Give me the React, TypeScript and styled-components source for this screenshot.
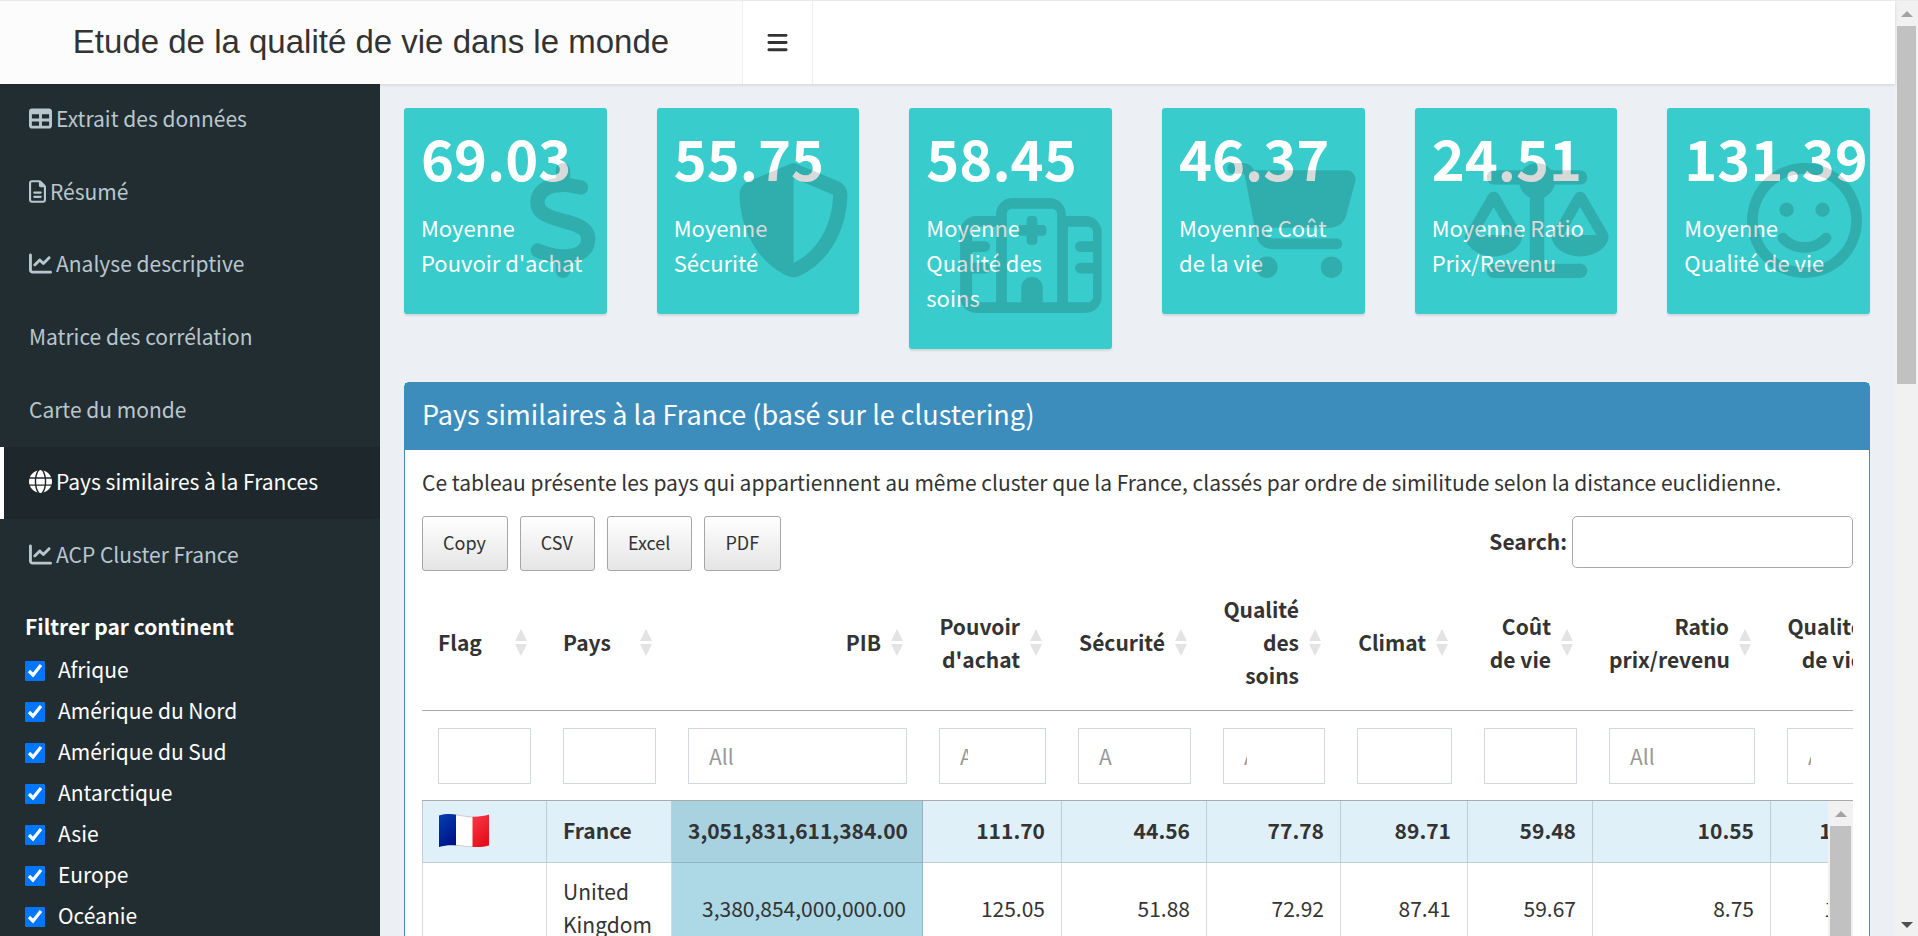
import React from 'react';
import styled, { createGlobalStyle } from 'styled-components';
import {
  FaBars,
  FaCartShopping,
  FaChartLine,
  FaDollarSign,
  FaGlobe,
  FaRegFaceSmile,
  FaRegFileLines,
  FaRegHospital,
  FaScaleBalanced,
  FaShieldHalved,
  FaTable,
} from 'react-icons/fa6';

const GlobalStyle = createGlobalStyle`
  * { box-sizing: border-box; }
  body {
    margin: 0;
    background: #ecf0f5;
    color: #333;
    font-family: "Noto Sans CJK SC", "Noto Sans", sans-serif;
    font-size: 21px;
    line-height: 33px;
  }
  h1, h2, h3, p, ul { margin: 0; padding: 0; }
  button, input { font: inherit; color: inherit; }
`;

/* ---------- page frame ---------- */

const Frame = styled.div`
  display: flex;
  height: 100vh;
  overflow: hidden;
  border-top: 1px solid #e8eaf0;
`;

const Page = styled.div`
  flex: 1;
  min-width: 0;
  display: flex;
  flex-direction: column;
`;

const Header = styled.header`
  position: relative;
  z-index: 1;
  flex: none;
  display: flex;
  height: 83px;
  background: #fff;
  box-shadow: 0 1px 3px rgba(0, 0, 0, 0.12);
`;

const Brand = styled.h1`
  width: 743px;
  border-right: 1px solid #eee;
  background: #fcfcfc;
  font: 400 33px/82px "Liberation Sans", Arial, sans-serif;
  text-align: center;
`;

const MenuToggle = styled.button`
  display: flex;
  align-items: center;
  justify-content: center;
  width: 70px;
  padding: 0;
  border: 0;
  border-right: 1px solid #eee;
  background: none;
  font-size: 23px;
`;

const Body = styled.div`
  flex: 1;
  min-height: 0;
  display: flex;
`;

/* ---------- sidebar ---------- */

const Sidebar = styled.aside`
  flex: none;
  width: 380px;
  overflow: hidden;
  background: #222d32;
  color: #fff;
`;

const Menu = styled.nav`
  display: grid;
  grid-auto-rows: 1fr;
  height: 508px;
`;

const MenuLink = styled.a<{ $active?: boolean }>`
  display: flex;
  align-items: center;
  gap: 4px;
  padding: 0 25px 3px;
  border-left: 4px solid ${(p) => (p.$active ? '#fff' : 'transparent')};
  background: ${(p) => (p.$active ? '#1e282c' : 'transparent')};
  color: ${(p) => (p.$active ? '#fff' : '#b8c7ce')};
  text-decoration: none;
`;

const MenuIcon = styled.span<{ $width: number }>`
  display: flex;

  svg { width: ${(p) => p.$width}px; height: 23px; }
`;

const Filters = styled.fieldset`
  margin: 0;
  padding: 18px 25px;
  border: 0;
`;

const FiltersTitle = styled.legend`
  float: left;
  width: 100%;
  padding: 0;
  margin-bottom: 7px;
  font-weight: 700;
`;

const FilterOption = styled.label`
  clear: both;
  display: flex;
  align-items: center;
  gap: 13px;
  height: 41px;

  input { width: 20px; height: 20px; margin: 0; accent-color: #0075ff; }
  span { padding-bottom: 2px; }
`;

/* ---------- value boxes ---------- */

const Main = styled.main`
  flex: 1;
  min-width: 0;
  padding: 24px 25px 0 24px;
  overflow: hidden;
`;

const ValueBoxes = styled.div`
  display: grid;
  grid-template-columns: repeat(6, 1fr);
  align-items: start;
  gap: 50px;
  margin-bottom: 33px;
`;

const ValueBox = styled.section`
  position: relative;
  min-width: 0;
  padding: 14px 16px 34px 17px;
  border-radius: 3px;
  background: #39cccc;
  color: #fff;
  box-shadow: 0 2px 2px rgba(0, 0, 0, 0.1);
`;

const Value = styled.h3`
  margin-bottom: 19px;
  font-size: 56px;
  font-weight: 700;
  line-height: 69px;
  white-space: nowrap;
`;

const ValueLabel = styled.p`
  font-size: 22px;
  line-height: 35px;
`;

const ValueIcon = styled.div<{ $width: number }>`
  position: absolute;
  right: 8px;
  bottom: 36px;
  display: flex;
  color: rgba(0, 0, 0, 0.15);

  svg { width: ${(p) => p.$width}px; height: 115px; }
`;

/* ---------- panel ---------- */

const Panel = styled.section`
  border: 1px solid #3c8dbc;
  border-radius: 5px 5px 0 0;
  background: #fff;
`;

const PanelTitle = styled.h2`
  padding: 14px 17px 20px;
  background: #3c8dbc;
  color: #fff;
  font-size: 27px;
  font-weight: 400;
  line-height: 33px;
`;

const PanelBody = styled.div`
  padding: 16px 16px 0 17px;
`;

const Toolbar = styled.div`
  display: flex;
  justify-content: space-between;
  align-items: flex-start;
  margin-top: 17px;
`;

const Buttons = styled.div`
  display: flex;
  gap: 12px;
`;

const ExportButton = styled.button`
  height: 55px;
  padding: 0 21px 2px 20px;
  border: 1px solid #a6a6a6;
  border-radius: 3px;
  background: linear-gradient(#fff, #e5e5e5);
  font-size: 18px;
`;

const Search = styled.label`
  display: flex;
  align-items: center;
  gap: 5px;
  font-weight: 700;

  span { padding-bottom: 2px; }
  input {
    width: 281px;
    height: 52px;
    padding: 0 8px;
    border: 1px solid #aaa;
    border-radius: 5px;
    background: transparent;
  }
`;

/* ---------- data table ---------- */

const Clip = styled.div`
  flex: 1;
  min-width: 0;
  overflow: hidden;
`;

const HeadClip = styled(Clip)`
  margin-top: 5px;
  border-bottom: 1px solid #aaa;
`;

const Table = styled.table`
  width: 1483px;
  table-layout: fixed;
  border-collapse: separate;
  border-spacing: 0;
`;

const HeadCell = styled.th<{ $left?: boolean }>`
  position: relative;
  padding: 17px 42px 18px 16px;
  border-bottom: 1px solid #aaa;
  text-align: ${(p) => (p.$left ? 'left' : 'right')};
  vertical-align: middle;

  svg { position: absolute; top: 53px; right: 20px; }
`;

const FilterCell = styled.td`
  height: 89px;
  padding: 0 16px;

  input {
    display: block;
    width: 100%;
    height: 56px;
    padding: 0 58px 0 20px;
    border: 1px solid #d2d6de;
    border-radius: 0;
    appearance: none;
    background: #fff;
  }
  input::placeholder { color: #999; opacity: 1; }
`;

const TableBody = styled.div`
  display: flex;
`;

const Row = styled.tr<{ $highlight?: boolean }>`
  background: ${(p) => (p.$highlight ? '#dff0f9' : '#fff')};
  font-weight: ${(p) => (p.$highlight ? 700 : 400)};
`;

const Cell = styled.td<{ $left?: boolean; $accent?: boolean }>`
  height: 62px;
  padding: 12px 16px 14px;
  border-right: 1px solid rgba(0, 0, 0, 0.14);
  border-bottom: 1px solid rgba(0, 0, 0, 0.14);
  background: ${(p) => (p.$accent ? '#add8e6' : 'transparent')};
  text-align: ${(p) => (p.$left ? 'left' : 'right')};

  ${Row}:first-child & {
    background: ${(p) => (p.$accent ? '#a9d2e0' : 'transparent')};
  }
  &:first-child { border-left: 1px solid rgba(0, 0, 0, 0.14); }
  svg { display: block; }
`;

/* ---------- scroll bars ---------- */

const ScrollTrack = styled.div<{ $width: number }>`
  flex: none;
  display: flex;
  flex-direction: column;
  align-items: center;
  width: ${(p) => p.$width}px;
  padding: 10px 0 8px;
  background: #f1f1f1;

  svg { flex: none; }
`;

const ScrollThumb = styled.div<{ $length?: string }>`
  flex: ${(p) => (p.$length ? `0 0 ${p.$length}` : '1 1 auto')};
  width: calc(100% - 4px);
  margin: 9px 0 auto;
  background: #c1c1c1;
`;

const Arrow = ({ down }: { down?: boolean }) => (
  <svg width="12" height="6" viewBox="0 0 12 6" aria-hidden="true">
    <path d={down ? 'M0 0H12L6 6Z' : 'M0 6H12L6 0Z'} fill={down ? '#505050' : '#a3a3a3'} />
  </svg>
);

const SortIcon = () => (
  <svg width="12" height="27" viewBox="0 0 12 27" aria-hidden="true">
    <path d="M6 0L12 12H0ZM0 15H12L6 27Z" fill="#e3e3e3" />
  </svg>
);

const FrenchFlag = () => (
  <svg width="50" height="34" viewBox="0 0 50 34" role="img" aria-label="France">
    <defs>
      <linearGradient id="blue" x1="0" y1="0" x2="0.5" y2="1">
        <stop offset="0" stopColor="#0040b0" />
        <stop offset="1" stopColor="#001489" />
      </linearGradient>
      <linearGradient id="red" x1="0" y1="0" x2="0.5" y2="1">
        <stop offset="0" stopColor="#fa3a48" />
        <stop offset="1" stopColor="#e4101c" />
      </linearGradient>
    </defs>
    <path d="M0 1.6C6 -.2 12 -.2 18 .7V31.6C12 30.8 6 31.2 0 33Z" fill="url(#blue)" />
    <path d="M17 .6C23 1.6 29 2.7 34 2.7V33C28 33 23 32 17 31.5Z" fill="#fff" />
    <path d="M17 .8C23 1.8 29 2.9 34 2.9M17 31.2C23 31.7 28 32.7 34 32.7" fill="none" stroke="#ccc" strokeWidth="1" />
    <path d="M33.500 2.700C40 2.900 45 2 50 .5V31.500C45 33 40 33.300 33.500 33Z" fill="url(#red)" />
  </svg>
);

/* ---------- data ---------- */

const menu = [
  { label: 'Extrait des données', icon: <FaTable />, width: 23 },
  { label: 'Résumé', icon: <FaRegFileLines />, width: 17 },
  { label: 'Analyse descriptive', icon: <FaChartLine />, width: 23 },
  { label: 'Matrice des corrélation' },
  { label: 'Carte du monde' },
  { label: 'Pays similaires à la Frances', icon: <FaGlobe />, width: 23, active: true },
  { label: 'ACP Cluster France', icon: <FaChartLine />, width: 23 },
];

const continents = ['Afrique', 'Amérique du Nord', 'Amérique du Sud', 'Antarctique', 'Asie', 'Europe', 'Océanie'];

const boxes = [
  { value: '69.03', label: "Moyenne Pouvoir d'achat", icon: <FaDollarSign />, width: 72 },
  { value: '55.75', label: 'Moyenne Sécurité', icon: <FaShieldHalved />, width: 115 },
  { value: '58.45', label: 'Moyenne Qualité des soins', icon: <FaRegHospital />, width: 144 },
  { value: '46.37', label: 'Moyenne Coût de la vie', icon: <FaCartShopping />, width: 130 },
  { value: '24.51', label: 'Moyenne Ratio Prix/Revenu', icon: <FaScaleBalanced />, width: 144 },
  { value: '131.39', label: 'Moyenne Qualité de vie', icon: <FaRegFaceSmile />, width: 115 },
];

const columns = [
  { title: 'Flag', width: 125 },
  { title: 'Pays', width: 125 },
  { title: 'PIB', width: 251 },
  { title: "Pouvoir d'achat", width: 139 },
  { title: 'Sécurité', width: 145 },
  { title: 'Qualité des soins', width: 134 },
  { title: 'Climat', width: 127 },
  { title: 'Coût de vie', width: 125 },
  { title: 'Ratio prix/revenu', width: 178 },
  { title: 'Qualité de vie', width: 134 },
];

const rows = [
  [<FrenchFlag />, 'France', '3,051,831,611,384.00', '111.70', '44.56', '77.78', '89.71', '59.48', '10.55', '153.64'],
  ['', 'United Kingdom', '3,380,854,000,000.00', '125.05', '51.88', '72.92', '87.41', '59.67', '8.75', '172.63'],
];

const Columns = () => (
  <colgroup>
    {columns.map((c) => (
      <col key={c.title} style={{ width: c.width }} />
    ))}
  </colgroup>
);

export default function App() {
  return (
    <>
      <GlobalStyle />
      <Frame>
        <Page>
          <Header>
            <Brand>Etude de la qualité de vie dans le monde</Brand>
            <MenuToggle type="button" aria-label="Menu">
              <FaBars />
            </MenuToggle>
          </Header>
          <Body>
            <Sidebar>
              <Menu>
                {menu.map((m) => (
                  <MenuLink key={m.label} href="#" $active={m.active}>
                    {m.icon && <MenuIcon $width={m.width}>{m.icon}</MenuIcon>}
                    <span>{m.label}</span>
                  </MenuLink>
                ))}
              </Menu>
              <Filters>
                <FiltersTitle>Filtrer par continent</FiltersTitle>
                {continents.map((c) => (
                  <FilterOption key={c}>
                    <input type="checkbox" defaultChecked />
                    <span>{c}</span>
                  </FilterOption>
                ))}
              </Filters>
            </Sidebar>
            <Main>
              <ValueBoxes>
                {boxes.map((b) => (
                  <ValueBox key={b.label}>
                    <Value>{b.value}</Value>
                    <ValueLabel>{b.label}</ValueLabel>
                    <ValueIcon $width={b.width}>{b.icon}</ValueIcon>
                  </ValueBox>
                ))}
              </ValueBoxes>
              <Panel>
                <PanelTitle>Pays similaires à la France (basé sur le clustering)</PanelTitle>
                <PanelBody>
                  <p>
                    Ce tableau présente les pays qui appartiennent au même cluster que la France, classés par ordre de
                    similitude selon la distance euclidienne.
                  </p>
                  <Toolbar>
                    <Buttons>
                      {['Copy', 'CSV', 'Excel', 'PDF'].map((b) => (
                        <ExportButton key={b} type="button">
                          {b}
                        </ExportButton>
                      ))}
                    </Buttons>
                    <Search>
                      <span>Search:</span>
                      <input type="search" />
                    </Search>
                  </Toolbar>
                  <HeadClip>
                    <Table>
                      <Columns />
                      <thead>
                        <tr>
                          {columns.map((c, i) => (
                            <HeadCell key={c.title} $left={i < 2}>
                              {c.title}
                              <SortIcon />
                            </HeadCell>
                          ))}
                        </tr>
                        <tr>
                          {columns.map((c) => (
                            <FilterCell key={c.title}>
                              <input type="search" placeholder="All" aria-label={c.title} />
                            </FilterCell>
                          ))}
                        </tr>
                      </thead>
                    </Table>
                  </HeadClip>
                  <TableBody>
                    <Clip>
                      <Table>
                        <Columns />
                        <tbody>
                          {rows.map((r, y) => (
                            <Row key={y} $highlight={y === 0}>
                              {r.map((v, x) => (
                                <Cell key={x} $left={x < 2} $accent={x === 2}>
                                  {v}
                                </Cell>
                              ))}
                            </Row>
                          ))}
                        </tbody>
                      </Table>
                    </Clip>
                    <ScrollTrack $width={25}>
                      <Arrow />
                      <ScrollThumb />
                    </ScrollTrack>
                  </TableBody>
                </PanelBody>
              </Panel>
            </Main>
          </Body>
        </Page>
        <ScrollTrack $width={23}>
          <Arrow />
          <ScrollThumb $length="39%" />
          <Arrow down />
        </ScrollTrack>
      </Frame>
    </>
  );
}
